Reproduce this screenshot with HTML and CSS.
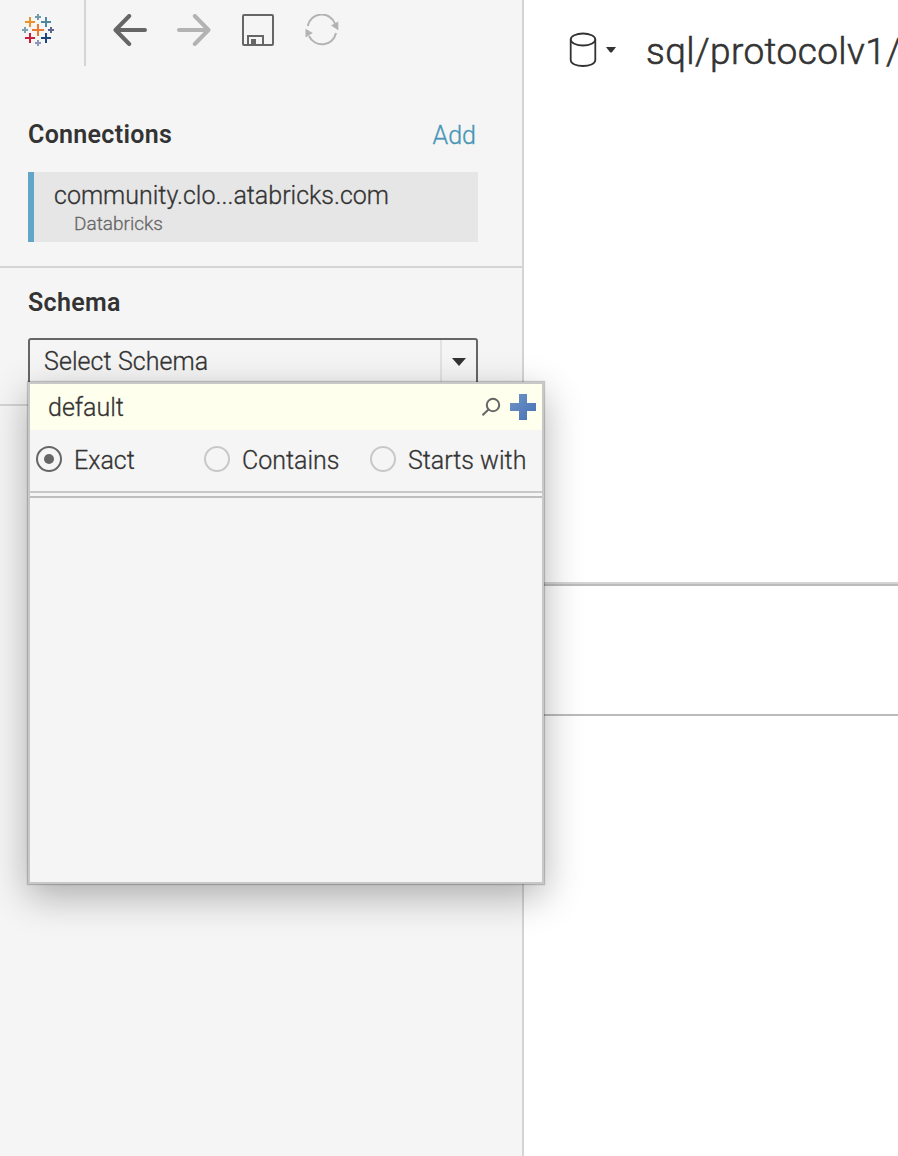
FILE: index.html
```html
<!DOCTYPE html>
<html lang="en">
<head>
<meta charset="utf-8">
<title>Data Source</title>
<link rel="stylesheet" href="styles.css">
</head>
<body>
<div class="app">
  <aside class="sidebar">
    <header class="toolbar">
      <div class="brand">
        <svg class="logo" width="32" height="32" viewBox="0 0 32 32" fill="none">
          <path d="M16 10v12M10 16h12" stroke="#eb7a2d" stroke-width="2"/>
          <path d="M8 3v10M3 8h10" stroke="#eb9129" stroke-width="2"/>
          <path d="M24 3v10M19 8h10" stroke="#4f86a0" stroke-width="2"/>
          <path d="M8 19v10M3 24h10" stroke="#c8203c" stroke-width="2"/>
          <path d="M24 19v10M19 24h10" stroke="#1c447e" stroke-width="2"/>
          <path d="M16 0v6M13 3h6" stroke="#7199a6" stroke-width="2"/>
          <path d="M3 13v6M0 16h6" stroke="#7ba2ae" stroke-width="2"/>
          <path d="M29 13v6M26 16h6" stroke="#5c6692" stroke-width="2"/>
          <path d="M16 26v6M13 29h6" stroke="#8b96b8" stroke-width="2"/>
        </svg>
      </div>
      <div class="tools">
        <svg class="tool back" width="34" height="32" viewBox="0 0 34 32"><path d="M32 16H3M16.200 2L2.500 16L16.200 30"/></svg>
        <svg class="tool forward" width="34" height="32" viewBox="0 0 34 32"><path d="M2 16H31M17.800 2L31.500 16L17.800 30"/></svg>
        <svg class="tool save" width="32" height="32" viewBox="0 0 32 32"><rect x="1" y="1" width="30" height="30" rx="1"/><path d="M6 31V22H21V31"/><path class="solid" d="M9 25h5v5H9z"/></svg>
        <svg class="tool refresh" width="34" height="32" viewBox="0 0 34 32"><path d="M2.700 12A14.300 14.300 0 0 1 30.200 10M31 19A14.300 14.300 0 0 1 4 22"/><path class="solid" d="M26 11.500L33.300 7.500V16.300zM0.500 14.800V23.500L7.800 19z"/></svg>
      </div>
    </header>
    <section class="connections">
      <div class="head">
        <h2 class="title">Connections</h2>
        <a class="add">Add</a>
      </div>
      <div class="connection">
        <span class="server">community.clo...atabricks.com</span>
        <span class="kind">Databricks</span>
      </div>
    </section>
    <section class="schema">
      <h2 class="title">Schema</h2>
      <div class="select">
        <span class="value">Select Schema</span>
        <span class="arrow"><svg width="14" height="8" viewBox="0 0 14 8"><path d="M0 0h14L7 8z" fill="#333"/></svg></span>
      </div>
      <div class="popup">
        <div class="search">
          <span class="query">default</span>
          <svg class="magnifier" width="20" height="20" viewBox="0 0 20 20" fill="none" stroke="#666" stroke-width="2"><circle cx="12" cy="8" r="6.200"/><path d="M7.500 12.500L1.500 18.200"/></svg>
          <svg class="plus" width="26" height="26" viewBox="0 0 26 26"><defs><linearGradient id="blue" x1="0" y1="0" x2="1" y2="1"><stop offset="0" stop-color="#7295c8"/><stop offset="1" stop-color="#4570b4"/></linearGradient></defs><path d="M9 0h8v9h9v8h-9v9H9v-9H0V9h9z" fill="url(#blue)"/></svg>
        </div>
        <div class="modes">
          <label class="mode exact"><i class="radio on"></i><span>Exact</span></label>
          <label class="mode contains"><i class="radio"></i><span>Contains</span></label>
          <label class="mode starts"><i class="radio"></i><span>Starts with</span></label>
        </div>
        <div class="results"></div>
      </div>
    </section>
  </aside>
  <main class="canvas">
    <div class="source">
      <svg class="database" width="28" height="36" viewBox="0 0 28 36" fill="none" stroke="#333" stroke-width="1.800"><ellipse cx="14" cy="7.500" rx="12.300" ry="6"/><path d="M1.700 7.500V28C1.700 36 26.300 36 26.300 28V7.500"/></svg>
      <svg class="caret" width="10" height="6" viewBox="0 0 10 6"><path d="M0 0h10L6 5.200Q5 6 4 5.200z" fill="#333"/></svg>
      <h1 class="name">sql/protocolv1/</h1>
    </div>
    <div class="band"></div>
  </main>
</div>
</body>
</html>
```

FILE: styles.css
```css
* { box-sizing: border-box; }
body { margin: 0; font-family: Roboto, "Liberation Sans", sans-serif; font-size: 25px; font-weight: 300; line-height: 30px; color: #333; background: #fff; -webkit-text-stroke: 0.3px currentColor; }
h1, h2 { margin: 0; }
svg { display: block; flex: none; }
.app { display: flex; width: 898px; height: 1156px; overflow: hidden; }
.sidebar { flex: none; width: 524px; background: #f5f5f5; border-right: 2px solid #d4d4d4; position: relative; z-index: 1; }
.toolbar { display: flex; height: 66px; }
.brand { width: 86px; border-right: 2px solid #d4d4d4; padding: 14px 0 0 22px; }
.tools { display: flex; gap: 30px; padding: 14px 0 0 27px; }
.tool { fill: none; stroke: #666; stroke-width: 4; stroke-linecap: round; stroke-linejoin: round; }
.forward { stroke: #b3b3b3; }
.save, .refresh { stroke-width: 2; stroke-linecap: butt; stroke-linejoin: miter; }
.save { margin: 0 1px; }
.refresh { stroke: #b3b3b3; }
.solid { fill: #666; stroke: none; }
.refresh .solid { fill: #b3b3b3; }

.connections { height: 202px; padding: 54px 0 0 28px; border-bottom: 2px solid #d4d4d4; }
.head { display: flex; justify-content: space-between; width: 448px; }
.title { font-size: 25px; font-weight: 600; line-height: 30px; letter-spacing: 0.3px; -webkit-text-stroke: 0; }
.add { color: #4996b7; padding-top: 1px; }
.connection { display: flex; flex-direction: column; width: 450px; height: 70px; margin-top: 21px; padding: 9px 0 0 20px; border-left: 6px solid #61a5c8; background: #e6e6e6; }
.server { white-space: nowrap; }
.kind { padding: 1px 0 0 20px; font-size: 19px; line-height: 24px; color: #666; }

.schema { position: relative; height: 138px; padding: 20px 0 0 28px; border-bottom: 2px solid #d4d4d4; }
.select { display: flex; width: 450px; height: 50px; margin-top: 20px; border: 2px solid #666; border-radius: 3px; }
.value { flex: 1; padding: 7px 0 0 14px; letter-spacing: 0.08px; }
.arrow { width: 36px; border-left: 2px solid #e2e2e2; padding: 18px 0 0 10px; }

.popup { position: absolute; left: 28px; top: 114px; width: 516px; height: 502px; border: 2px solid #c8c8c8; background: #f5f5f5; box-shadow: 0 0 1px 1px rgba(0,0,0,.2), 0 12px 36px rgba(0,0,0,.3); }
.search { display: flex; height: 46px; background: #ffffee; padding-left: 18px; }
.query { flex: 1; padding-top: 9px; }
.magnifier { margin: 13px 9px 0 0; }
.plus { margin: 10px 6px 0 0; }
.modes { display: flex; height: 63px; padding: 16px 0 0 6px; border-bottom: 2px solid #c8c8c8; }
.mode { display: flex; gap: 12px; white-space: nowrap; }
.exact { width: 168px; }
.contains { width: 166px; }
.radio { flex: none; width: 26px; height: 26px; border: 2px solid #c8c8c8; border-radius: 50%; }
.radio.on { border-color: #666; padding: 6px; }
.radio.on::before { content: ""; display: block; width: 10px; height: 10px; border-radius: 50%; background: #666; }
.results { height: 386px; margin-top: 3px; border-top: 2px solid #bdbfbd; }

.canvas { flex: 1; min-width: 0; overflow: hidden; }
.source { display: flex; height: 584px; padding: 32px 0 0 45px; border-bottom: 2px solid #d4d4d4; }
.caret { margin: 15px 0 0 9px; }
.name { margin-left: 30px; font-size: 37px; font-weight: 300; line-height: 40px; letter-spacing: 0.4px; white-space: nowrap; -webkit-text-stroke: 0.6px currentColor; }
.band { height: 132px; border-top: 2px solid #bbb; border-bottom: 2px solid #bbb; }
```
